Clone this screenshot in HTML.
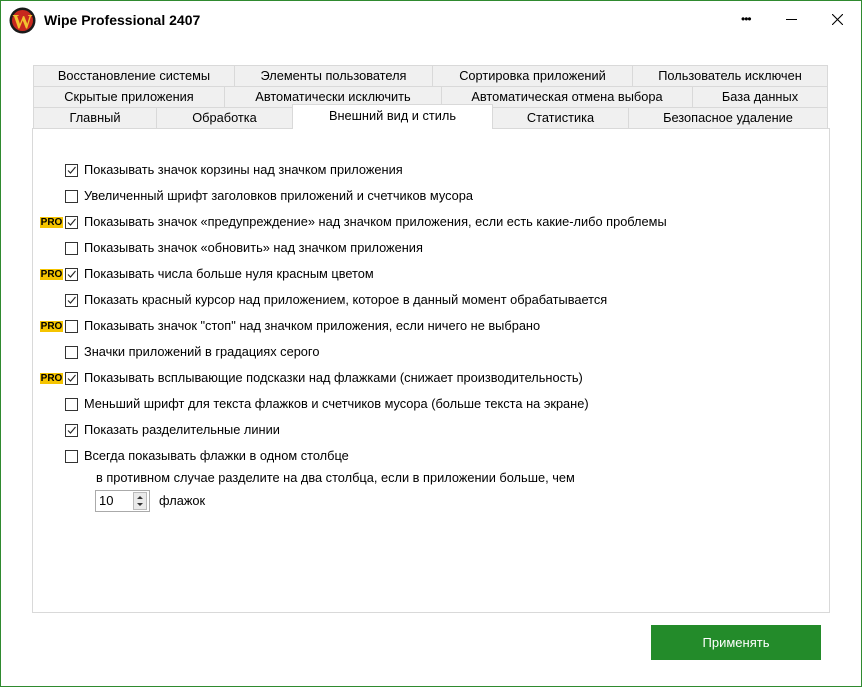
<!DOCTYPE html>
<html><head><meta charset="utf-8"><style>
*{margin:0;padding:0;box-sizing:border-box}
body{width:862px;height:687px;overflow:hidden;background:#fff;font-family:"Liberation Sans",sans-serif;font-size:13px;color:#000;position:relative}
.win{position:absolute;left:0;top:0;width:862px;height:687px;border:1px solid #2f8a2f}
.abs{position:absolute}
.tab{position:absolute;height:22px;background:#f0f0f0;border:1px solid #d9d9d9;text-align:center;line-height:20px;font-size:12.8px;color:#000;white-space:nowrap}
.panel{position:absolute;left:32px;top:128px;width:798px;height:485px;border:1px solid #d9d9d9;background:#fff}
.cb{position:absolute;left:65px;width:13px;height:13px;border:1px solid #333;background:#fff}
.cb svg{position:absolute;left:0;top:0}
.lbl{position:absolute;left:84px;font-size:12.8px;line-height:16px;white-space:nowrap}
.pro{position:absolute;left:40px;width:23px;height:11px;background:#f5c400;font-size:10px;font-weight:bold;line-height:11px;text-align:center;color:#000}
</style></head><body>
<div class="win"></div>
<svg class="abs" style="left:9px;top:7px" width="27" height="27" viewBox="0 0 27 27">
<circle cx="13.5" cy="13.5" r="13" fill="#1a1a1a"/><circle cx="13.5" cy="13.5" r="10.5" fill="#c8281e"/>
<text x="13.5" y="21" text-anchor="middle" font-family="Liberation Serif" font-weight="bold" font-size="20" fill="#f2c230">W</text></svg>
<div class="abs" style="left:44px;top:12px;font-size:14px;font-weight:bold">Wipe Professional 2407</div>
<div class="abs" style="left:741px;top:12px;font-size:12px;letter-spacing:-1px">•••</div>
<div class="abs" style="left:786px;top:19px;width:11px;height:1px;background:#000"></div>
<svg class="abs" style="left:832px;top:14px" width="11" height="11"><path d="M0 0L11 11M11 0L0 11" stroke="#000" stroke-width="1.1"/></svg>

<div class="tab" style="left:33px;top:65px;width:202px">Восстановление системы</div>
<div class="tab" style="left:234px;top:65px;width:199px">Элементы пользователя</div>
<div class="tab" style="left:432px;top:65px;width:201px">Сортировка приложений</div>
<div class="tab" style="left:632px;top:65px;width:196px">Пользователь исключен</div>
<div class="tab" style="left:33px;top:86px;width:192px">Скрытые приложения</div>
<div class="tab" style="left:224px;top:86px;width:218px">Автоматически исключить</div>
<div class="tab" style="left:441px;top:86px;width:252px">Автоматическая отмена выбора</div>
<div class="tab" style="left:692px;top:86px;width:136px">База данных</div>
<div class="tab" style="left:33px;top:107px;width:124px">Главный</div>
<div class="tab" style="left:156px;top:107px;width:137px">Обработка</div>
<div class="tab" style="left:492px;top:107px;width:137px">Статистика</div>
<div class="tab" style="left:628px;top:107px;width:200px">Безопасное удаление</div>
<div class="panel"></div>
<div class="tab" style="left:292px;top:104px;width:201px;height:25px;background:#fff;border-bottom:none;line-height:22px">Внешний вид и стиль</div>

<div class="cb" style="top:164px"><svg width="11" height="11"><path d="M2 5.5L4.5 8L9.5 2" stroke="#222" fill="none" stroke-width="1.1"/></svg></div><div class="lbl" style="top:162px">Показывать значок корзины над значком приложения</div>
<div class="cb" style="top:190px"></div><div class="lbl" style="top:188px">Увеличенный шрифт заголовков приложений и счетчиков мусора</div>
<div class="pro" style="top:217px">PRO</div><div class="cb" style="top:216px"><svg width="11" height="11"><path d="M2 5.5L4.5 8L9.5 2" stroke="#222" fill="none" stroke-width="1.1"/></svg></div><div class="lbl" style="top:214px">Показывать значок «предупреждение» над значком приложения, если есть какие-либо проблемы</div>
<div class="cb" style="top:242px"></div><div class="lbl" style="top:240px">Показывать значок «обновить» над значком приложения</div>
<div class="pro" style="top:269px">PRO</div><div class="cb" style="top:268px"><svg width="11" height="11"><path d="M2 5.5L4.5 8L9.5 2" stroke="#222" fill="none" stroke-width="1.1"/></svg></div><div class="lbl" style="top:266px">Показывать числа больше нуля красным цветом</div>
<div class="cb" style="top:294px"><svg width="11" height="11"><path d="M2 5.5L4.5 8L9.5 2" stroke="#222" fill="none" stroke-width="1.1"/></svg></div><div class="lbl" style="top:292px">Показать красный курсор над приложением, которое в данный момент обрабатывается</div>
<div class="pro" style="top:321px">PRO</div><div class="cb" style="top:320px"></div><div class="lbl" style="top:318px">Показывать значок "стоп" над значком приложения, если ничего не выбрано</div>
<div class="cb" style="top:346px"></div><div class="lbl" style="top:344px">Значки приложений в градациях серого</div>
<div class="pro" style="top:373px">PRO</div><div class="cb" style="top:372px"><svg width="11" height="11"><path d="M2 5.5L4.5 8L9.5 2" stroke="#222" fill="none" stroke-width="1.1"/></svg></div><div class="lbl" style="top:370px">Показывать всплывающие подсказки над флажками (снижает производительность)</div>
<div class="cb" style="top:398px"></div><div class="lbl" style="top:396px">Меньший шрифт для текста флажков и счетчиков мусора (больше текста на экране)</div>
<div class="cb" style="top:424px"><svg width="11" height="11"><path d="M2 5.5L4.5 8L9.5 2" stroke="#222" fill="none" stroke-width="1.1"/></svg></div><div class="lbl" style="top:422px">Показать разделительные линии</div>
<div class="cb" style="top:450px"></div><div class="lbl" style="top:448px">Всегда показывать флажки в одном столбце</div>
<div class="lbl" style="left:96px;top:470px">в противном случае разделите на два столбца, если в приложении больше, чем</div>
<div class="abs" style="left:95px;top:490px;width:55px;height:22px;border:1px solid #aaa;background:#fff">
<div class="abs" style="left:3px;top:2px;font-size:13px">10</div>
<div class="abs" style="left:37px;top:1px;width:14px;height:18px;background:#eaeaea;border:1px solid #bbb">
<svg width="12" height="16"><path d="M3 6L6 3L9 6Z M3 10L6 13L9 10Z" fill="#333"/></svg></div></div>
<div class="lbl" style="left:159px;top:493px">флажок</div>

<div class="abs" style="left:651px;top:625px;width:170px;height:35px;background:#238b2a;color:#fff;font-size:13px;text-align:center;line-height:35px">Применять</div>
</body></html>
